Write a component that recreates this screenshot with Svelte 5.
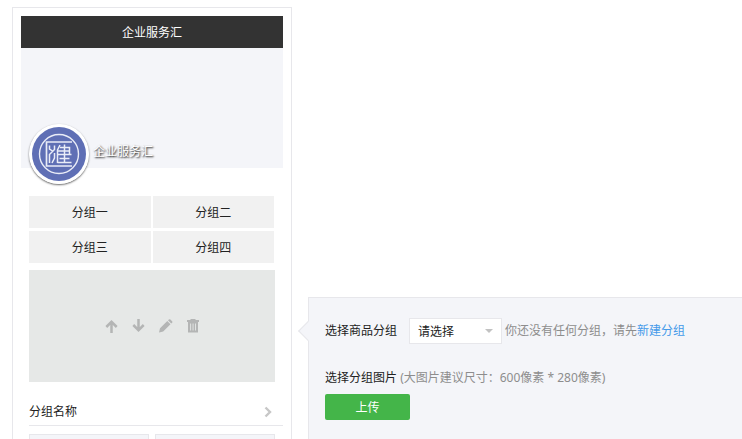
<script lang="ts">
  const shopName = "企业服务汇";
  const groups = ["分组一", "分组二", "分组三", "分组四"];

  let selected = $state("");
</script>

<div class="page">
  <section class="phone">
    <header class="phone-title">{shopName}</header>
    <div class="banner">
      <div class="shop">
        <svg class="avatar" viewBox="0 0 60 60" role="img" aria-label={shopName}>
          <circle cx="30" cy="30" r="30" fill="#fff" />
          <circle cx="30" cy="30" r="27" fill="#5f6fb5" />
          <g fill="none" stroke="#e9ecf7">
            <circle cx="30" cy="30" r="19.5" stroke-width="1.4" />
            <path stroke-width="1.7" d="M43 18H17.500V42H43" />
            <path stroke-width="1.5" d="M20.500 21.500v3.500l3 2M25.500 21.500v4l-5 5V39M25.500 29v5l-2.500 5M31 21l-2.500 5V39M31 23.500h9.500v7M29 27h11.500M29 30.500h13.500M30.500 34.500h10M28.500 38.500h14M35.500 20.500v18" />
          </g>
        </svg>
        <span class="shop-name">{shopName}</span>
      </div>
    </div>

    <nav class="groups">
      {#each groups as group}
        <a href="#group">{group}</a>
      {/each}
    </nav>

    <div class="picture">
      <button aria-label="上移">
        <svg viewBox="0 0 14 14"><path d="M6.500 14V2.500M1.300 8l5.200-5.200L11.700 8" /></svg>
      </button>
      <button aria-label="下移">
        <svg viewBox="0 0 14 14"><path d="M6.500 0v11.500M1.300 6l5.200 5.200L11.700 6" /></svg>
      </button>
      <button aria-label="编辑">
        <svg viewBox="0 0 14 14">
          <path class="solid" d="M0 13.500l1-4.200 7.300-7.300 3.200 3.200-7.300 7.300zM9 1.300l.9-.8q.8-.6 1.500 0l1.700 1.700q.6.7 0 1.500l-.9.9z" />
        </svg>
      </button>
      <button aria-label="删除">
        <svg viewBox="0 0 14 14">
          <path class="solid" fill-rule="evenodd" d="M1 1h3.500V0h5v1H13v2H1zM2 3h10v10.500H2zM4.200 4.500v7h.9v-7zM6.600 4.500v7h.9v-7zM9 4.500v7h.9v-7z" />
        </svg>
      </button>
    </div>

    <a class="group-name" href="#detail">
      <span>分组名称</span>
      <svg viewBox="0 0 8 12"><path d="M1.500 1.500L6 6l-4.500 4.500" /></svg>
    </a>
    <div class="goods">
      <div class="good"></div>
      <div class="good"></div>
    </div>
  </section>

  <form class="panel">
    <div class="row">
      <label for="group">选择商品分组</label>
      <span class="select-box">
        <select id="group" bind:value={selected}>
          <option value="">请选择</option>
        </select>
      </span>
      <span class="hint">你还没有任何分组，请先<a href="#new">新建分组</a></span>
    </div>
    <div class="field">
      <label for="upload">选择分组图片</label>
      <span class="hint">(大图片建议尺寸：600像素 * 280像素)</span>
    </div>
    <button id="upload" class="upload" type="button">上传</button>
  </form>
</div>

<style>
  :global(body) {
    background: #fff;
    color: #222;
    font: 12px/18px "Noto Sans", "Noto Sans CJK SC", sans-serif;
  }

  .page {
    display: flex;
    gap: 16px;
    height: 100vh;
    padding: 7px 0 0 12px;
    overflow: hidden;
    box-sizing: border-box;
  }

  button,
  select {
    font: inherit;
    cursor: pointer;
  }

  a {
    color: inherit;
    text-decoration: none;
  }

  .phone {
    flex: 0 0 262px;
    align-self: flex-start;
    padding: 8px;
    border: 1px solid #e7e7eb;
  }

  .phone-title,
  .groups a {
    padding-top: 2px;
    line-height: 30px;
    text-align: center;
  }

  .phone-title {
    background: #333;
    color: #fff;
  }

  .banner {
    display: flex;
    align-items: flex-end;
    height: 120px;
    background: #f4f5f9;
  }

  .shop {
    display: flex;
    align-items: center;
    gap: 4px;
    margin: 0 8px -16px;
  }

  .avatar {
    width: 60px;
    height: 60px;
    border-radius: 50%;
    box-shadow: 0 1px 2px rgba(0, 0, 0, 0.6);
  }

  .shop-name {
    padding-bottom: 4px;
    color: #fff;
    text-shadow: 1px 1px 2px #000;
  }

  .groups {
    display: grid;
    grid-template-columns: 1fr 1fr;
    gap: 3px 2px;
    margin: 28px 9px 7px 8px;
  }

  .groups a {
    background: #f1f1f1;
  }

  .picture {
    display: flex;
    align-items: center;
    justify-content: center;
    gap: 13px;
    height: 112px;
    margin: 0 8px;
    background: #e6e8e7;
  }

  .picture button {
    padding: 0;
    border: 0;
    background: none;
  }

  .picture svg {
    display: block;
    width: 14px;
    height: 14px;
    fill: none;
    stroke: #b4b5b5;
    stroke-width: 2.5;
  }

  .picture .solid {
    fill: #b4b5b5;
    stroke: none;
  }

  .group-name {
    display: flex;
    align-items: center;
    justify-content: space-between;
    margin: 16px 0 8px 8px;
    padding: 1px 11px 0 0;
    border-bottom: 1px solid #e7e7eb;
    line-height: 26px;
  }

  .group-name svg {
    width: 8px;
    height: 12px;
    fill: none;
    stroke: #c7c7c7;
    stroke-width: 2.4;
  }

  .goods {
    display: grid;
    grid-template-columns: 1fr 1fr;
    gap: 6px;
    margin: 0 8px;
  }

  .good {
    height: 120px;
    border: 1px solid #e7e7eb;
    background: #f4f5f9;
  }

  .panel {
    position: relative;
    flex: 1;
    margin-top: 290px;
    padding: 20px 16px;
    border: 1px solid #e7e7eb;
    border-width: 1px 0 0 1px;
    background: #f4f5f9;
  }

  /* pointer towards the edited block */
  .panel::before {
    content: "";
    position: absolute;
    top: 26px;
    left: -8px;
    width: 13px;
    height: 13px;
    border: 1px solid #e7e7eb;
    border-width: 0 0 1px 1px;
    background: #f4f5f9;
    transform: rotate(45deg);
  }

  .row {
    display: flex;
    align-items: center;
    white-space: nowrap;
  }

  .select-box {
    position: relative;
    margin: 0 3px 0 12px;
  }

  .select-box::after {
    content: "";
    position: absolute;
    top: 11px;
    right: 9px;
    border: 4px solid transparent;
    border-top-color: #c2c2c2;
    border-bottom: 0;
    pointer-events: none;
  }

  select {
    display: block;
    width: 93px;
    height: 26px;
    padding: 2px 8px 0;
    border: 1px solid #e7e7eb;
    border-radius: 0;
    background: #fff;
    color: #222;
    appearance: none;
  }

  .hint {
    color: #8d8d8d;
  }

  .hint a {
    color: #459ae9;
  }

  .field {
    margin: 25px 0 7px;
    white-space: nowrap;
  }

  .upload {
    display: block;
    width: 85px;
    height: 26px;
    padding: 2px 0 0;
    border: 0;
    border-radius: 2px;
    background: #44b549;
    color: #fff;
  }
</style>
